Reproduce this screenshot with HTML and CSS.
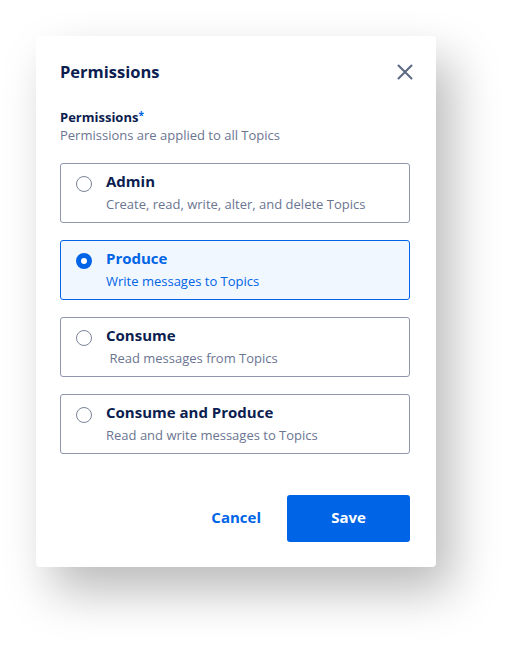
FILE: index.html
```html
<!DOCTYPE html>
<html lang="en">
<head>
<meta charset="utf-8">
<title>Permissions</title>
<link rel="stylesheet" href="styles.css">
</head>
<body>
<div class="dialog">
  <div class="header">
    <h1 class="title">Permissions</h1>
    <button class="close" aria-label="Close">
      <svg width="16" height="16" viewBox="0 0 16 16"><path d="M1.5 1.5L14.5 14.5M14.5 1.5L1.5 14.5" stroke="#5b6884" stroke-width="2" stroke-linecap="round" fill="none"/></svg>
    </button>
  </div>
  <div class="field-label">Permissions<span class="req">*</span></div>
  <div class="field-help">Permissions are applied to all Topics</div>
  <div class="options">
    <label class="option">
      <span class="radio"></span>
      <span class="text">
        <span class="opt-title">Admin</span>
        <span class="opt-desc">Create, read, write, alter, and delete Topics</span>
      </span>
    </label>
    <label class="option selected">
      <span class="radio"></span>
      <span class="text">
        <span class="opt-title">Produce</span>
        <span class="opt-desc">Write messages to Topics</span>
      </span>
    </label>
    <label class="option">
      <span class="radio"></span>
      <span class="text">
        <span class="opt-title">Consume</span>
        <span class="opt-desc">&nbsp;Read messages from Topics</span>
      </span>
    </label>
    <label class="option">
      <span class="radio"></span>
      <span class="text">
        <span class="opt-title">Consume and Produce</span>
        <span class="opt-desc">Read and write messages to Topics</span>
      </span>
    </label>
  </div>
  <div class="footer">
    <button class="btn-link">Cancel</button>
    <button class="btn-primary">Save</button>
  </div>
</div>
</body>
</html>
```

FILE: styles.css
```css
* { box-sizing: border-box; }
html, body { margin: 0; background: #ffffff; }
body {
  min-height: 100vh;
  padding: 36px;
  font-family: "Open Sans", "Liberation Sans", sans-serif;
  color: #0c1d4f;
}
.dialog {
  width: 400px;
  height: 531px;
  background: #fff;
  border-radius: 4px;
  box-shadow: 16px 24px 48px rgba(0, 0, 0, 0.27);
  padding: 24px 26px 25px 24px;
}
.header {
  display: flex;
  align-items: center;
  justify-content: space-between;
  height: 23px;
}
.title {
  margin: 0;
  font-size: 16.5px;
  font-weight: 700;
  line-height: 23px;
  color: #0c1d4f;
}
.close {
  background: none;
  border: 0;
  padding: 0;
  width: 16px;
  height: 16px;
  margin-right: -3px;
  display: flex;
}
.field-label {
  margin-top: 25px;
  font-size: 13px;
  font-weight: 700;
  line-height: 18px;
  color: #0c1d4f;
}
.req { color: #0064e6; font-size: 10px; vertical-align: top; line-height: 14px; }
.field-help {
  font-size: 13px;
  line-height: 18px;
  color: #6b7591;
}
.options {
  margin-top: 19px;
  display: flex;
  flex-direction: column;
  gap: 17px;
}
.option {
  display: flex;
  align-items: flex-start;
  gap: 14px;
  height: 60px;
  padding: 7px 16px 8px 15px;
  border: 1px solid #8e97ae;
  border-radius: 3px;
  cursor: pointer;
}
.radio {
  flex: none;
  width: 16px;
  height: 16px;
  margin-top: 5px;
  border: 1.5px solid #7b849a;
  border-radius: 50%;
  background: #fff;
}
.text { display: flex; flex-direction: column; gap: 4px; }
.opt-title {
  font-size: 15px;
  font-weight: 700;
  line-height: 20px;
  color: #0c1d4f;
}
.opt-desc {
  font-size: 13px;
  line-height: 18px;
  color: #6b7591;
}
.option.selected {
  border-color: #0064e6;
  background: #f1f7ff;
}
.option.selected .radio {
  border: 5px solid #0064e6;
}
.option.selected .opt-title,
.option.selected .opt-desc { color: #0064e6; }
.footer {
  margin-top: 41px;
  display: flex;
  justify-content: flex-end;
  align-items: center;
  gap: 26px;
}
.btn-link {
  background: none;
  border: 0;
  padding: 0 0 3px;
  font-family: inherit;
  font-size: 15px;
  font-weight: 700;
  color: #0064e6;
  cursor: pointer;
}
.btn-primary {
  width: 123px;
  height: 47px;
  border: 0;
  border-radius: 3px;
  padding: 0 0 3px;
  background: #0064e6;
  color: #fff;
  font-family: inherit;
  font-size: 15px;
  font-weight: 700;
  cursor: pointer;
}
```
